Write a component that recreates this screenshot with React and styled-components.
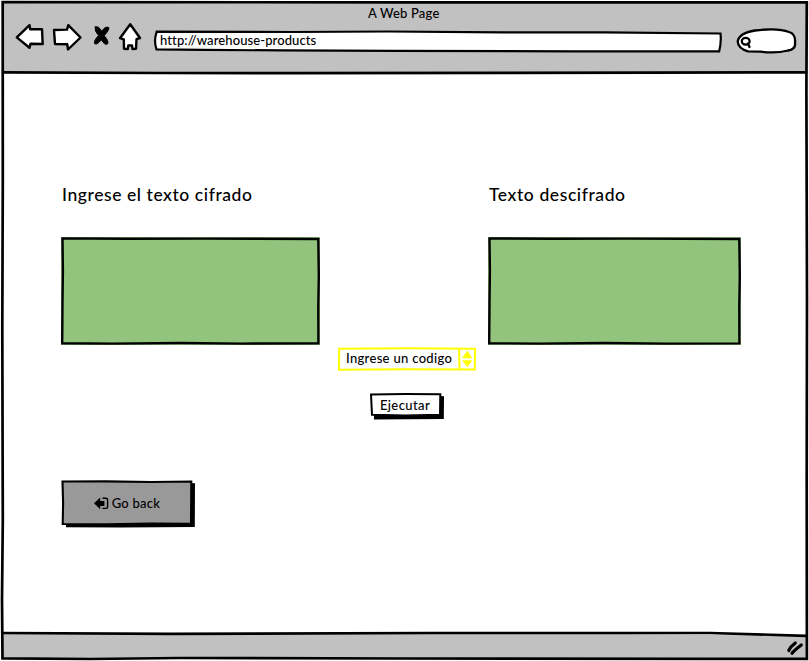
import React from "react";
import styled, { createGlobalStyle } from "styled-components";

const GlobalStyle = createGlobalStyle`
  * { box-sizing: border-box; }
  html, body { margin: 0; padding: 0; background: #fff; overflow: hidden; }
  button, input { font: inherit; color: inherit; }
`;

const Window = styled.div`
  position: relative;
  display: flex;
  flex-direction: column;
  width: 809px;
  height: 661px;
  padding: 2px 2px 2px 3px;
  background: #fff;
  color: #000;
  font-family: Lato, "Open Sans", sans-serif;
  font-size: 13px;
  font-weight: 500;
`;

const Outline = styled.svg`
  position: absolute;
  inset: 0;
  width: 100%;
  height: 100%;
  overflow: visible;
  pointer-events: none;
  fill: none;
  stroke: ${(p) => p.$color || "#000"};
  stroke-width: ${(p) => p.$weight || 2.5};
  stroke-linejoin: miter;
  stroke-linecap: round;
`;

const Header = styled.header`
  display: flex;
  flex-direction: column;
  flex: 0 0 70px;
  background: #c1c1c1;
`;

const Title = styled.h1`
  margin: 3px 0 1px 365px;
  width: 80px;
  height: 16px;
  font-size: 13px;
  line-height: 16px;
  font-weight: 500;
  letter-spacing: 0.2px;
  white-space: nowrap;
`;

const Toolbar = styled.div`
  display: flex;
  align-items: flex-start;
  height: 40px;
`;

const NavIcons = styled.svg`
  flex: 0 0 132px;
  height: 32px;
  margin: 0 0 0 11px;
  stroke: #000;
  stroke-width: 2.4;
  stroke-linejoin: round;
  stroke-linecap: round;
  fill: #fff;
`;

const AddressBar = styled.div`
  position: relative;
  width: 568px;
  height: 22px;
  margin: 8px 0 0 7px;
  padding-left: 7px;
  line-height: 21px;
`;

const Url = styled.span`
  position: relative;
  letter-spacing: 0.1px;
  white-space: nowrap;
`;

const SearchBox = styled.svg`
  width: 62px;
  height: 28px;
  margin: 5px 0 0 14px;
  fill: #fff;
  stroke: #000;
  stroke-width: 2.3;
  stroke-linecap: round;
  stroke-linejoin: round;
`;

const Main = styled.main`
  display: flex;
  flex-direction: column;
  align-items: flex-start;
  flex: 1;
  padding: 112px 0 0 58px;
`;

const Panels = styled.section`
  display: grid;
  grid-template-columns: 259px 253px;
  column-gap: 168px;
`;

const Field = styled.div`
  display: flex;
  flex-direction: column;
  gap: 31px;
`;

const Label = styled.label`
  height: 22px;
  padding-left: 1px;
  font-size: 17.5px;
  line-height: 22px;
  font-weight: 500;
  letter-spacing: ${(p) => p.$spacing};
  white-space: nowrap;
`;

const TextPanel = styled.div`
  position: relative;
  height: 108px;
  background: #93c47d;
`;

const Controls = styled.section`
  display: flex;
  flex-direction: column;
  align-items: center;
  gap: 22px;
  width: 138px;
  margin: 2px 0 0 277px;
`;

const Select = styled.div`
  display: flex;
  align-items: center;
  position: relative;
  width: 138px;
  height: 24px;
  padding: 0 0 2px 8px;
  white-space: nowrap;
  letter-spacing: ${(p) => p.$spacing};
`;

const Button = styled.button`
  position: relative;
  display: flex;
  align-items: center;
  justify-content: center;
  width: ${(p) => p.$width};
  height: ${(p) => p.$height};
  padding: ${(p) => p.$padding};
  border: 0;
  background: none;
  letter-spacing: ${(p) => p.$spacing};
  white-space: nowrap;
`;

const Caption = styled.span`
  position: relative;
`;

const BackButton = styled(Button)`
  gap: 3px;
  margin-top: 61px;
`;

const BackIcon = styled.svg`
  position: relative;
  width: 15px;
  height: 13px;
`;

const Footer = styled.footer`
  display: flex;
  justify-content: flex-end;
  flex: 0 0 26px;
  background: #c1c1c1;
  clip-path: polygon(0 0, 65% 0, 100% 3px, 100% 100%, 0 100%);
`;

const Grip = styled.svg`
  width: 20px;
  height: 16px;
  margin: 7px 2px 0 0;
`;

function SketchPanel({ width }) {
  const w = width;
  return (
    <TextPanel>
      <Outline $weight={2.4}>
        <path
          d={`M1.5 1.4 L${w * 0.25} 1.7 L${w * 0.55} 1.6 L${w - 1.7} 2 L${w - 1.2} 38 L${w - 1.7} 70 L${w - 1.6} 106.4 L${w * 0.7} 106.6 L${w * 0.46} 106 L${w * 0.2} 106.6 L1.2 106.2 L1.5 66 L1.9 34 Z`}
        />
      </Outline>
    </TextPanel>
  );
}

export default function App() {
  return (
    <>
      <GlobalStyle />
      <Window>
        <Header>
          <Title>A Web Page</Title>
          <Toolbar>
            <NavIcons viewBox="14 22 132 32">
              <path d="M16.8 37.4 L29.5 25.2 L30.2 29.2 L42 29.2 L42.7 44 L30.5 43.8 L29.5 47.8 Z" />
              <path d="M54 30 L67 29.6 L68.3 25.2 L80.5 37.5 L68 49.5 L67.3 44.3 L55 44 Z" />
              <path
                fill="#000"
                strokeWidth="1"
                d="M95.2 27 Q99 25.5 101.7 31.5 Q105 26 108.7 27.4 Q110 29 104.2 35.7 Q109 41 107.7 43.8 Q105 46 101.2 39.6 Q97.5 45 94.8 43.8 Q93 41.5 98.5 35.5 Q94 30.5 95.2 27 Z"
              />
              <path d="M120 38.2 L130.2 24.3 L140 38 L136.5 39.2 L136 48.8 L132.5 49 L132 45.4 L128.3 45.5 L127.8 49 L124 48.8 L123.8 39.4 Z" />
            </NavIcons>
            <AddressBar>
              <Outline $weight={2.2}>
                <path
                  fill="#fff"
                  d="M3.7 1.7 L140 2 L235 1.5 L350 2.3 L450 2.3 L567.5 3.5 Q568.5 12 566.2 21.3 L420 21.4 L240 20.8 L130 20.4 L50 19.9 L3.5 19.4 Q.5 11 3.7 1.7 Z"
                />
              </Outline>
              <Url>http://warehouse-products</Url>
            </AddressBar>
            <SearchBox viewBox="735 27 62 28">
              <path d="M755 30.5 Q778 27.5 789 32 Q796 34 795 43 Q796 49 788 50.5 Q776 53.5 761 51.7 L748 51.3 Q738 48.5 737.7 41.5 Q739 33 755 30.5 Z" />
              <ellipse cx="745.7" cy="41.3" rx="3.9" ry="3.4" />
              <path d="M748 43.5 L749.5 47" />
            </SearchBox>
          </Toolbar>
        </Header>

        <Main>
          <Panels>
            <Field>
              <Label $spacing="0.57px">Ingrese el texto cifrado</Label>
              <SketchPanel width={259} />
            </Field>
            <Field>
              <Label $spacing="0.59px">Texto descifrado</Label>
              <SketchPanel width={253} />
            </Field>
          </Panels>

          <Controls>
            <Select $spacing="0.32px">
              <Outline $color="#ffff00" $weight={2}>
                <path d="M1.2 1.7 L70 1.2 L137 1.8 L136.8 22.6 L65 22.3 L1 22.7 Z M121.2 2 L121.4 22.5" />
                <path fill="#ffff00" strokeWidth="1" d="M129.5 4.5 L133.5 10.8 L125.2 10.8 Z M125.2 13.8 L133.5 13.8 L129.5 19.3 Z" />
              </Outline>
              <Caption>Ingrese un codigo</Caption>
            </Select>
            <Button $width="74px" $height="26px" $padding="0 4px 2px 0" $spacing="0.4px">
              <Outline $weight={2}>
                <path fill="#000" stroke="none" d="M69 3 L74 3.2 L73.8 26 L4 26.4 L4 21 Z" />
                <path fill="#fff" d="M1 1.4 L35 1 L70.3 1.3 L70 21.7 L35 22.6 L2 21.8 Z" />
              </Outline>
              <Caption>Ejecutar</Caption>
            </Button>
          </Controls>

          <BackButton $width="134px" $height="48px" $padding="0 2px 2px 0" $spacing="0.25px">
            <Outline $weight={2.1}>
              <path fill="#000" stroke="none" d="M128 3 L134 3.2 L133.8 47 L60 47.6 L5 47.2 L5 42 Z" />
              <path fill="#999" d="M1.5 1.5 L45 1.4 L90 2 L130.3 1.5 L130 43.7 L90 43.5 L45 44.2 L1.7 44 L2.1 23 Z" />
            </Outline>
            <BackIcon viewBox="0 0 15 13">
              <path d="M0 6.3 L6.2 .5 V3.9 H10.4 V8.9 H6.2 V12.2 Z" />
              <path d="M8.5 1.2 H12 Q13.6 1.2 13.6 2.8 V9.8 Q13.6 11.4 12 11.4 H8.5" fill="none" stroke="#000" strokeWidth="1.4" />
            </BackIcon>
            <Caption>Go back</Caption>
          </BackButton>
        </Main>

        <Footer>
          <Grip viewBox="0 0 20 16">
            <path d="M3.8 10.5 Q5.5 6.5 10.3 3 M7 13.3 Q9 10.5 16.3 5" fill="none" stroke="#000" strokeWidth="3.2" strokeLinecap="round" />
          </Grip>
        </Footer>

        <Outline $weight={2.7}>
          <path d="M2.7 2.2 L400 2.3 L806.8 2.4 L806.4 90 L807 300 L806.7 480 L806.9 658.8 L700 658.8 L400 658.5 L180 658 L90 659 L2.5 658.3 L2 600 L2.8 520 L2.3 330 L2.8 180 Z" />
          <path d="M3 72.4 L160 73 L300 73.2 L500 72.8 L650 72.7 L806 72.3 M3 633 L170 633.8 L430 633 L710 633 L806 635.8" />
        </Outline>
      </Window>
    </>
  );
}
